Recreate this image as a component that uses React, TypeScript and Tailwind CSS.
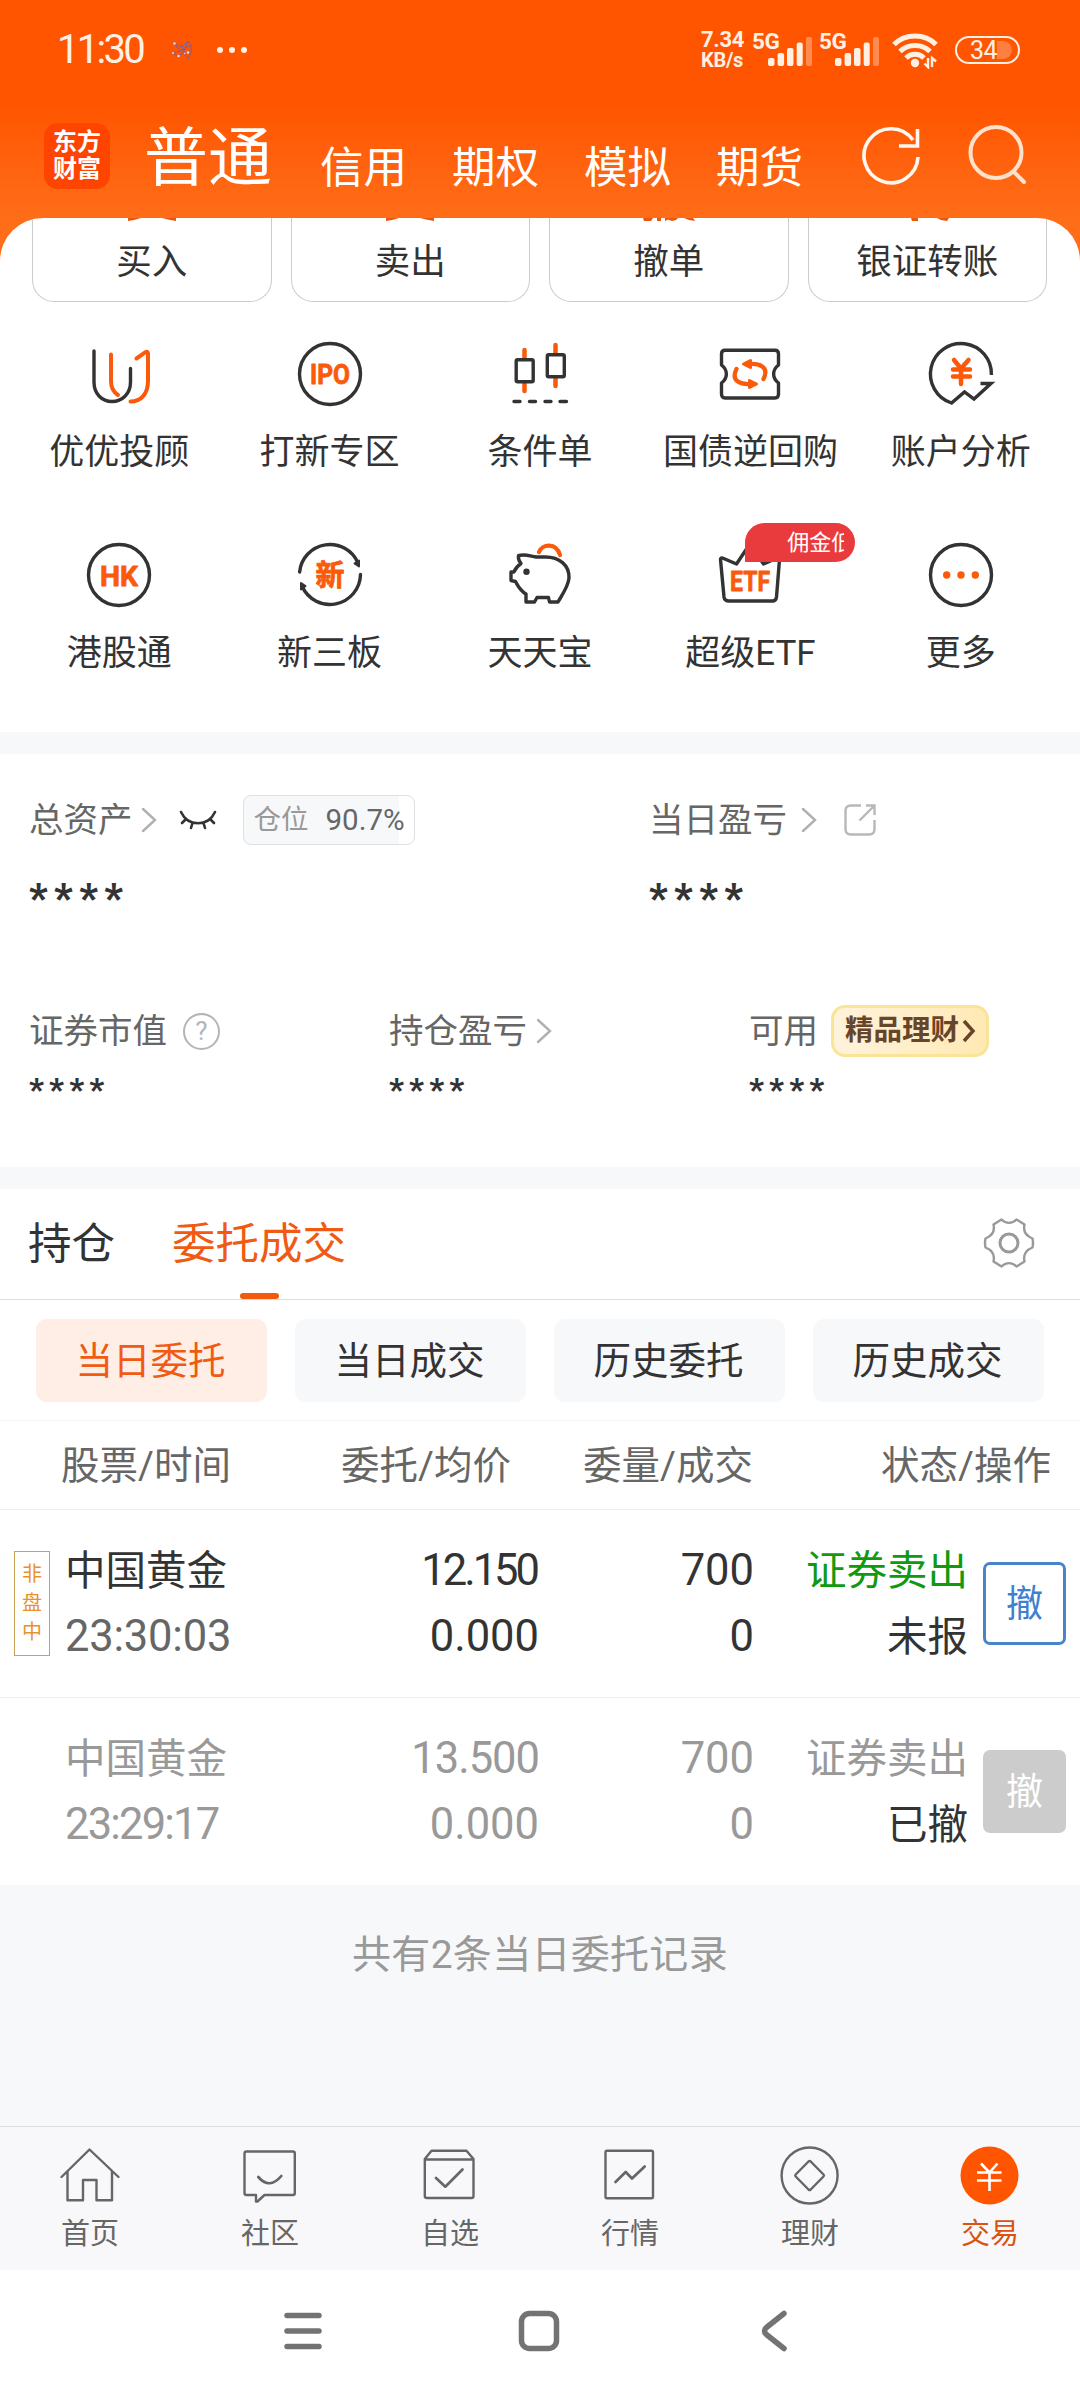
import type { ReactNode } from "react";
import clsx from "clsx";

const INK = "#333333";
const ORANGE = "#fa5a0a";

const markets = ["信用", "期权", "模拟", "期货"];

// Bottom edges of the action glyphs, still peeking out from under the header
const actions = [
  { label: "买入", sliver: "M14 0H27L20 2L14 3ZM48 0H62V3L54 1.5Z" },
  { label: "卖出", sliver: "M14 0H27L20 2L14 3ZM48 0H62V3L54 1.5Z" },
  { label: "撤单", sliver: "M12 0H22L20 3H13ZM26 0H30V3H26ZM34 0H47L45 2L41 3L37 1.5L34 3ZM53 0H62L64 3L58 2Z" },
  { label: "银证转账", sliver: "M22 0H29V3H23ZM48 0H60L58 3L52 2Z" },
];

const filters = ["当日委托", "当日成交", "历史委托", "历史成交"];

interface Order {
  name: string;
  time: string;
  timeClass: string;
  price: string;
  priceClass: string;
  avg: string;
  qty: string;
  filled: string;
  side: string;
  status: string;
  tag?: string;
  active: boolean;
}

const orders: Order[] = [
  {
    name: "中国黄金",
    time: "23:30:03",
    timeClass: "tracking-[-0.2px]",
    price: "12.150",
    priceClass: "tracking-[-3px] pr-[2px]",
    avg: "0.000",
    qty: "700",
    filled: "0",
    side: "证券卖出",
    status: "未报",
    tag: "非盘中",
    active: true,
  },
  {
    name: "中国黄金",
    time: "23:29:17",
    timeClass: "tracking-[-1.800px]",
    price: "13.500",
    priceClass: "tracking-[-1px]",
    avg: "0.000",
    qty: "700",
    filled: "0",
    side: "证券卖出",
    status: "已撤",
    active: false,
  },
];

function GlyphIcon({ children }: { children: ReactNode }) {
  return (
    <svg
      width="80"
      height="80"
      viewBox="0 0 80 80"
      fill="none"
      stroke={INK}
      strokeWidth="3.4"
      strokeLinecap="round"
      strokeLinejoin="round"
    >
      {children}
    </svg>
  );
}

function IconText({ children, y, size, length }: { children: string; y: number; size: number; length: number }) {
  return (
    <text
      x={40 - length / 2}
      y={y}
      fontSize={size}
      fontWeight="700"
      textLength={length}
      lengthAdjust="spacingAndGlyphs"
      fill={ORANGE}
      stroke={ORANGE}
      strokeWidth="0.8"
    >
      {children}
    </text>
  );
}

const shortcuts: { label: string; badge?: string; icon: ReactNode }[] = [
  {
    label: "优优投顾",
    icon: (
      <GlyphIcon>
        <path d="M15 17V48C15 60 23 67.5 33 67.5S51.5 60 51.5 48V34.5" />
        <path d="M32 20.5V47C32 54 35 58.500 39 61M57.500 24.500L66.500 18.200Q69 16.800 69 20V47C69 60 62 67.500 51.500 67.500" stroke={ORANGE} strokeWidth="4" />
      </GlyphIcon>
    ),
  },
  {
    label: "打新专区",
    icon: (
      <GlyphIcon>
        <circle cx="40" cy="40" r="30.500" />
        <IconText y={50} size={28} length={40}>IPO</IconText>
      </GlyphIcon>
    ),
  },
  {
    label: "条件单",
    icon: (
      <GlyphIcon>
        <g stroke={ORANGE} strokeWidth="4.500">
          <path d="M24.500 16V24M24.500 49V57M55.500 11V19M55.500 44V52" />
        </g>
        <rect x="16.200" y="25.700" width="17" height="22" rx="1.500" />
        <rect x="47.300" y="20.700" width="17" height="22" rx="1.500" />
        <path d="M14 67.500H20M29.500 67.500H35.500M45 67.500H51M60 67.500H66.500" />
      </GlyphIcon>
    ),
  },
  {
    label: "国债逆回购",
    icon: (
      <GlyphIcon>
        <path d="M15 16.200H65Q68.500 16.200 68.500 20V31C62 36 62 44 68.500 49V60Q68.500 64 65 64H15Q11.500 64 11.500 60V49C18 44 18 36 11.500 31V20Q11.500 16.200 15 16.200Z" />
        <g stroke={ORANGE} strokeWidth="4.200">
          <path d="M26.500 35C20 48 32 50.500 40 50M53.500 45C60 32 48 29.500 40 30" />
          <path d="M40.500 26.500V33.500L33.500 30ZM39.500 46.500V53.500L46.500 50Z" fill={ORANGE} strokeWidth="3" />
        </g>
      </GlyphIcon>
    ),
  },
  {
    label: "账户分析",
    icon: (
      <GlyphIcon>
        <path d="M70.400 41A30.500 30.500 0 1 0 30.500 69L43.500 58L53 65L70 49.500H59.500" strokeLinecap="butt" strokeLinejoin="miter" />
        <path d="M33 26L40 34.500L47.500 26M40 34.500V50M32 35.500H49M32 42.500H49" stroke={ORANGE} strokeWidth="4.500" />
      </GlyphIcon>
    ),
  },
  {
    label: "港股通",
    icon: (
      <GlyphIcon>
        <circle cx="40" cy="40" r="30.500" />
        <IconText y={50.500} size={28} length={38}>HK</IconText>
      </GlyphIcon>
    ),
  },
  {
    label: "新三板",
    icon: (
      <GlyphIcon>
        <path d="M9.600 37A30.500 30.500 0 0 1 68 28M70.500 39.500A30.500 30.500 0 0 1 12 51" />
        <path d="M64.500 28.500L69 25.500V31.500ZM11 54.500V48L15.500 51Z" fill={INK} strokeWidth="2" />
        <IconText y={50.500} size={29} length={29}>新</IconText>
      </GlyphIcon>
    ),
  },
  {
    label: "天天宝",
    icon: (
      <GlyphIcon>
        <path d="M39 17C42 9 56 7 60 20" stroke={ORANGE} strokeWidth="4.200" />
        <path d="M18.500 20.700C24 18.500 30 21 36 22H43C60 21 69.500 31 69 43C68.500 51 62 60 58 67H49.500L48.500 62.500H37L34.500 67H26V59C20 55.500 18 51 15.500 46.500L11 45.500V37H14C15.500 33 18 30.500 21 28.500C18.500 25.500 18 23.500 18.500 20.700Z" />
        <circle cx="26.500" cy="36.700" r="3.200" fill={INK} stroke="none" />
      </GlyphIcon>
    ),
  },
  {
    label: "超级ETF",
    badge: "佣金低",
    icon: (
      <GlyphIcon>
        <path d="M10.500 24.500Q10.500 22.300 12.500 23L26.500 29L37.500 12.500Q40 9.500 42.500 12.500L53.500 29L67.500 23Q69.700 22.300 69.500 24.500L66.500 62Q66 66 62.500 66H19Q14.500 66 14 62Z" />
        <IconText y={55.500} size={28} length={40}>ETF</IconText>
      </GlyphIcon>
    ),
  },
  {
    label: "更多",
    icon: (
      <GlyphIcon>
        <circle cx="40" cy="40" r="30.500" />
        <g fill={ORANGE} stroke="none">
          <circle cx="25.700" cy="40" r="3.700" />
          <circle cx="40" cy="40" r="3.700" />
          <circle cx="54.300" cy="40" r="3.700" />
        </g>
      </GlyphIcon>
    ),
  },
];

const tabs: { label: string; active?: boolean; icon: ReactNode }[] = [
  { label: "首页", icon: <path d="M6.500 37L34.500 9.500L63.500 37M12.500 31V60.300H28V40H41.500V60.300H57V31" /> },
  {
    label: "社区",
    icon: (
      <>
        <path d="M11.500 11.500H58Q59.800 11.500 59.800 13.500V53Q59.800 55 58 55H29.500L22.500 61.500H21V55H11.500Q9.500 55 9.500 53V13.500Q9.500 11.500 11.500 11.500Z" />
        <path d="M23.300 37Q34.500 50 46.300 36" strokeWidth="2.700" />
      </>
    ),
  },
  {
    label: "自选",
    icon: (
      <>
        <path d="M9.800 19L16.500 10.800H51.500L58.500 19V56Q58.500 58 56.500 58H12Q9.800 58 9.800 56ZM9.800 19.500H58.500" />
        <path d="M21 38L30.300 46.700L47.500 29.500" strokeWidth="2.700" />
      </>
    ),
  },
  {
    label: "行情",
    icon: (
      <>
        <rect x="10.500" y="10.800" width="47.500" height="47.500" rx="1.500" />
        <path d="M20.500 42L30.700 32L37 38.500L49.700 26.500" strokeWidth="2.700" />
      </>
    ),
  },
  {
    label: "理财",
    icon: (
      <>
        <circle cx="34.600" cy="35.500" r="28" />
        <path d="M33.500 21.500Q34.600 20.500 35.700 21.500L48.500 34.500Q49.500 35.500 48.500 36.500L35.700 49.500Q34.600 50.500 33.500 49.500L20.700 36.500Q19.700 35.500 20.700 34.500Z" />
      </>
    ),
  },
  {
    label: "交易",
    active: true,
    icon: (
      <>
        <circle cx="34.500" cy="35.500" r="29" fill="#ff5500" stroke="none" />
        <path d="M26 23.500L34.500 32.500L42.500 23.500M34.500 32.500V51M22 32.500H46.500M22 40.500H46.500" stroke="#ffffff" strokeWidth="2.600" strokeLinecap="butt" />
      </>
    ),
  },
];

function Chevron({ className }: { className?: string }) {
  return (
    <svg className={className} width="16" height="26" viewBox="0 0 16 26" fill="none" stroke="#b0b0b0" strokeWidth="2.400" strokeLinecap="round">
      <path d="M2 2L14 13L2 24" />
    </svg>
  );
}

function Signal() {
  return (
    <div className="flex w-[67px] shrink-0 items-start">
      <span className="-mt-px h-5 w-[16px] whitespace-nowrap text-[22.500px] leading-5 font-bold tracking-[-0.5px]">5G</span>
      <svg width="45" height="36" viewBox="0 0 45 36" fill="currentColor">
        <rect x="0" y="26" width="6.500" height="8" rx="2" />
        <rect x="9.600" y="21" width="6.500" height="13" rx="2" />
        <rect x="19" y="16" width="6.500" height="18" rx="2" />
        <rect x="28.700" y="10.500" width="6" height="23.500" rx="2" />
        <rect x="38" y="5" width="6" height="29" rx="2" opacity="0.350" />
      </svg>
    </div>
  );
}

function StatusBar() {
  return (
    <div className="flex h-[100px] items-center pr-[60px] pl-[57px] text-[#fff0e4]">
      <span className="w-[114px] text-[40px] leading-none tracking-[-2.700px]">11:30</span>
      <svg width="22" height="22" viewBox="0 0 22 22" fill="none" stroke="#8a5a90" strokeWidth="1">
        <path d="M3 4L11 8L17 2L20 6V13L17 20L12 14L7 17L1 14L9 12L3 4M11 8L14 16M17 2L12 14M20 6L9 12" />
        <g fill="#e8dcf4" stroke="none">
          <circle cx="3.500" cy="4.500" r="1.200" />
          <circle cx="2" cy="14" r="1" />
          <circle cx="7.500" cy="17" r="1.200" />
          <circle cx="17" cy="13.500" r="1.200" />
          <circle cx="13.500" cy="14.500" r="0.800" />
        </g>
      </svg>
      <div className="ml-6 flex gap-[6px]">
        <i className="size-[6px] rounded-full bg-current" />
        <i className="size-[6px] rounded-full bg-current" />
        <i className="size-[6px] rounded-full bg-current" />
      </div>
      <div className="ml-auto flex items-center">
        <div className="w-[51px] text-[22px] leading-[20px] font-bold tracking-[-0.3px]">
          <div>7.34</div>
          <div className="text-[20px]">KB/s</div>
        </div>
        <Signal />
        <Signal />
        <svg className="ml-[6px]" width="48" height="38" viewBox="0 0 48 38" fill="none" stroke="currentColor" strokeWidth="5">
          <path d="M2 13.500C13 2 33 2 44 13.500M8 20.500C16 12.500 30 12.500 38 20.500M14 27C19 22 27 22 32 27" />
          <circle cx="23" cy="32" r="4.200" fill="currentColor" stroke="none" />
          <path d="M36 27V36L32.500 32.500M40 36V27L44 30.500" strokeWidth="2.400" />
        </svg>
        <div className="ml-[15px] flex h-[28px] w-[65px] items-center rounded-full border-[2.500px] border-current">
          <span className="ml-[13px] text-[25px] leading-none tracking-[-0.5px]">34</span>
          <i className="h-[18px] w-[15px] rounded-r-full bg-white/25" />
        </div>
      </div>
    </div>
  );
}

function MarketBar() {
  return (
    <div className="flex h-[118px] items-start pl-[44px] text-white">
      <div className="mt-[23px] flex h-[66px] w-[66px] flex-col items-center justify-center rounded-[14px] bg-[#ff4400] text-[24px] leading-[27px] font-bold">
        <span>东方</span>
        <span>财富</span>
      </div>
      <span className="mt-[24px] ml-[34px] text-[64px] leading-[70px]">普通</span>
      <div className="mt-[40px] ml-[48px] flex gap-[45px] text-[43.500px] leading-[58px]">
        {markets.map((m) => (
          <span key={m}>{m}</span>
        ))}
      </div>
      <svg className="mt-[25px] ml-[59px]" width="60" height="60" viewBox="0 0 60 60" fill="none" stroke="#fff8f0" strokeWidth="3.600">
        <path d="M56 32A27 27 0 1 1 51 15M55.500 4V21H37" />
      </svg>
      <svg className="mt-[24px] ml-[46px]" width="60" height="62" viewBox="0 0 60 62" fill="none" stroke="#ffe2cc" strokeWidth="4" strokeLinecap="round">
        <circle cx="28" cy="28.500" r="25.500" />
        <path d="M45.500 47.500L56 58" />
      </svg>
    </div>
  );
}

function QuickActions() {
  return (
    <div className="flex h-[84px] gap-[19px] pr-[33px] pl-[32px]">
      {actions.map((a) => (
        <div key={a.label} className="flex flex-1 flex-col items-center rounded-b-[22px] border border-t-0 border-[#cccccc]">
          <svg width="76" height="4" viewBox="0 0 76 4" fill="#e8560f">
            <path d={a.sliver} />
          </svg>
          <span className="mt-[16px] text-[35.500px] leading-[48px]">{a.label}</span>
        </div>
      ))}
    </div>
  );
}

function Shortcuts() {
  return (
    <div className="grid h-[430px] grid-cols-5 content-start gap-y-[41px] px-[14px] pt-[32px]">
      {shortcuts.map((s) => (
        <div key={s.label} className="relative flex h-[160px] flex-col items-center">
          {s.icon}
          <span className="mt-[15px] text-[35px] leading-[48px] whitespace-nowrap">{s.label}</span>
          {s.badge && (
            <div className="absolute top-[-12px] left-[100px] flex h-[39px] w-[110px] items-center rounded-[20px] rounded-bl-none bg-[#e93b3d] pr-[11px] pl-[42px]">
              <span className="w-full overflow-hidden text-[22px] leading-[38px] whitespace-nowrap text-white">{s.badge}</span>
            </div>
          )}
        </div>
      ))}
    </div>
  );
}

function Stars({ large }: { large?: boolean }) {
  return (
    <div
      className={clsx(
        "font-black text-[#333333]",
        large ? "mt-[34px] h-10 text-[40px] leading-[40px] tracking-[6.500px]" : "mt-[17px] h-8 text-[32px] leading-[32px] tracking-[5.200px]"
      )}
    >
      ****
    </div>
  );
}

function Assets() {
  return (
    <div className="h-[413px] pt-[41px] pl-[29px] text-[#666666]">
      <div className="flex h-[211px]">
        <div className="w-[620px]">
          <div className="flex h-[50px] items-center">
            <span className="text-[34.500px] leading-[50px]">总资产</span>
            <Chevron className="ml-[8px]" />
            <svg className="ml-[22px]" width="38" height="20" viewBox="0 0 38 20" fill="none" stroke={INK} strokeWidth="2.600" strokeLinecap="round">
              <path d="M2 2C9 17 29 17 36 2M7 9L3 13M13.500 13L12 18M24.500 13L26 18M31 9L35 13" />
            </svg>
            <div className="ml-[26px] flex h-[50px] w-[172px] items-center overflow-hidden rounded-lg border border-[#e0e0e2] bg-gradient-to-r from-[#f7f8fa] from-[91%] to-white to-[91%] pl-[10px]">
              <span className="text-[27.500px] text-[#999999]">仓位</span>
              <span className="ml-[17px] text-[29.500px]">90.7%</span>
            </div>
          </div>
          <Stars large />
        </div>
        <div>
          <div className="flex h-[50px] items-center">
            <span className="text-[34.500px] leading-[50px]">当日盈亏</span>
            <Chevron className="ml-[14px]" />
            <svg className="ml-[26px]" width="34" height="34" viewBox="0 0 34 34" fill="none" stroke="#b8b8b8" strokeWidth="2.400">
              <path d="M18 2.500H8Q2.500 2.500 2.500 8V26Q2.500 31.500 8 31.500H26Q31.500 31.500 31.500 26V17M23 2.500H31.500V12M31.500 2.500L16.500 17.500" />
            </svg>
          </div>
          <Stars large />
        </div>
      </div>
      <div className="flex">
        <div className="w-[360px]">
          <div className="flex h-[50px] items-center">
            <span className="text-[34.500px] leading-[50px]">证券市值</span>
            <div className="ml-4 flex size-[37px] items-center justify-center rounded-full border-[2.500px] border-[#b5b5b5] text-[26px] leading-none text-[#b5b5b5]">?</div>
          </div>
          <Stars />
        </div>
        <div className="w-[360px]">
          <div className="flex h-[50px] items-center">
            <span className="text-[34.500px] leading-[50px]">持仓盈亏</span>
            <Chevron className="ml-[9px]" />
          </div>
          <Stars />
        </div>
        <div>
          <div className="flex h-[50px] items-center">
            <span className="text-[34.500px] leading-[50px]">可用</span>
            <div className="ml-[13px] flex h-[52px] w-[158px] items-center rounded-[14px] border-[3px] border-[#fae596] bg-gradient-to-r from-[#fff3dc] to-[#ffe9b4] pl-[11px] text-[#67452a]">
              <span className="text-[28.500px] leading-[46px] font-bold">精品理财</span>
              <svg className="ml-[3px]" width="14" height="24" viewBox="0 0 14 24" fill="none" stroke="currentColor" strokeWidth="3.500">
                <path d="M2 2L11 12L2 22" />
              </svg>
            </div>
          </div>
          <Stars />
        </div>
      </div>
    </div>
  );
}

function OrderTabs() {
  return (
    <div className="flex h-[111px] border-b border-[#dddddd] pr-[45px] pl-[28px] text-[43.500px] leading-[112px]">
      <span className="mr-[57px]">持仓</span>
      <div className="flex flex-col items-center text-[#f05a12]">
        <span className="h-[104px]">委托成交</span>
        <i className="h-[6px] w-[39px] rounded-full bg-[#f45a0c]" />
      </div>
      <svg className="mt-[28px] ml-auto" width="52" height="52" viewBox="0 0 52 52" fill="none" stroke="#999999" strokeWidth="2.400" strokeLinejoin="round">
        <path d="M18.500 2.500L10.500 7.500C12 14 9 19 2.500 21.500Q1.500 26 2.500 30.500C9 33 12 38 10.500 44.500L18.500 49.500C23 45 29 45 33.500 49.500L41.500 44.500C40 38 43 33 49.500 30.500Q50.500 26 49.500 21.500C43 19 40 14 41.500 7.500L33.500 2.500C29 7 23 7 18.500 2.500Z" />
        <circle cx="26" cy="26" r="9" strokeWidth="3" />
      </svg>
    </div>
  );
}

function Filters() {
  return (
    <div className="flex h-[121px] gap-7 border-b border-[#f4f4f4] px-9 pt-[19px]">
      {filters.map((f, i) => (
        <div
          key={f}
          className={clsx(
            "flex h-[83px] flex-1 items-center justify-center rounded-[11px] pt-[2px] pr-[2px] text-[37.500px]",
            i === 0 ? "bg-[#ffeee6] text-[#f05a12]" : "bg-[#f7f8fa]"
          )}
        >
          {f}
        </div>
      ))}
    </div>
  );
}

function OrderRow({ order }: { order: Order }) {
  const muted = !order.active;
  return (
    <div
      className={clsx(
        "flex pt-[28px] text-[39.500px] leading-[66px]",
        muted ? "h-[187px] text-[#999999]" : "h-[188px] border-b border-[#eeeeee]"
      )}
    >
      <div className="w-[65px] pt-[13px] pl-[14px]">
        {order.tag && (
          <div className="flex h-[105px] w-9 flex-col items-center justify-center border border-[#c9a256] text-[20px] leading-[29px] text-[#e8922e]">
            {order.tag.split("").map((c) => (
              <span key={c}>{c}</span>
            ))}
          </div>
        )}
      </div>
      <div className="w-[200px]">
        <div className="text-[40.500px]">{order.name}</div>
        <div className={clsx("text-[43.500px]", order.timeClass, !muted && "text-[#666666]")}>{order.time}</div>
      </div>
      <div className="w-[274px] text-right text-[43.500px]">
        <div className={order.priceClass}>{order.price}</div>
        <div>{order.avg}</div>
      </div>
      <div className="w-[215px] text-right text-[43.500px]">
        <div>{order.qty}</div>
        <div>{order.filled}</div>
      </div>
      <div className="w-[214px] text-right text-[40.500px]">
        <div className={clsx(!muted && "text-[#109a10]")}>{order.side}</div>
        <div className="text-[#333333]">{order.status}</div>
      </div>
      <div
        className={clsx(
          "mt-[24px] ml-[15px] flex h-[83px] w-[83px] items-center justify-center rounded-[7px] pt-[2px] text-[37px]",
          muted ? "bg-[#cccccc] text-white" : "border-[3px] border-[#4a84c8] text-[#3f80d0]"
        )}
      >
        撤
      </div>
    </div>
  );
}

function Orders() {
  return (
    <div>
      <div className="flex h-[89px] border-b border-[#eeeeee] text-[38.500px] leading-[90px] text-[#666666]">
        <span className="w-[231px] pl-[61px] whitespace-nowrap">股票/时间</span>
        <span className="w-[280px] text-right">委托/均价</span>
        <span className="w-[242px] text-right">委量/成交</span>
        <span className="w-[298px] text-right">状态/操作</span>
      </div>
      {orders.map((o) => (
        <OrderRow key={o.time} order={o} />
      ))}
    </div>
  );
}

function TabBar() {
  return (
    <div className="grid h-[144px] grid-cols-6 border-t border-[#dddddd] bg-[#f8f8fa] pt-[13px]">
      {tabs.map((t) => (
        <div key={t.label} className={clsx("flex flex-col items-center", t.active ? "text-[#d9540f]" : "text-[#666666]")}>
          <svg width="70" height="70" viewBox="0 0 70 70" fill="none" stroke="#666666" strokeWidth="2.400" strokeLinecap="round" strokeLinejoin="round">
            {t.icon}
          </svg>
          <span className="mt-[4px] text-[29px] leading-[41px]">{t.label}</span>
        </div>
      ))}
    </div>
  );
}

function SystemNav() {
  return (
    <div className="flex h-[130px] items-start justify-center bg-white pt-[36px]">
      <svg width="540" height="50" viewBox="0 0 540 50" fill="none" stroke="#737373" strokeWidth="5.500" strokeLinecap="round">
        <path d="M17 9.500H49M17 25H49M17 40.500H49" />
        <rect x="251.500" y="7.500" width="35" height="35" rx="8" />
        <path d="M514 7.500L497 21Q492 25 497 29L514 42.500" strokeLinejoin="round" />
      </svg>
    </div>
  );
}

export default function App() {
  return (
    <div className="h-[2400px] w-[1080px] overflow-hidden bg-[#ff6d18] font-[Roboto,'Noto_Sans_CJK_SC',sans-serif] text-[#333333]">
      <header className="bg-gradient-to-b from-[#ff5500] from-[48%] to-[#ff6d18]">
        <StatusBar />
        <MarketBar />
      </header>
      <main className="overflow-hidden rounded-t-[43px] bg-white">
        <QuickActions />
        <Shortcuts />
        <div className="h-[22px] bg-[#f7f8fa]" />
        <Assets />
        <div className="h-[22px] bg-[#f7f8fa]" />
        <OrderTabs />
        <Filters />
        <Orders />
        <div className="h-[241px] bg-[#f7f8fa] pt-[44px] text-center text-[39px] leading-[53px] tracking-[0.3px] text-[#999999]">
          共有2条当日委托记录
        </div>
      </main>
      <TabBar />
      <SystemNav />
    </div>
  );
}
